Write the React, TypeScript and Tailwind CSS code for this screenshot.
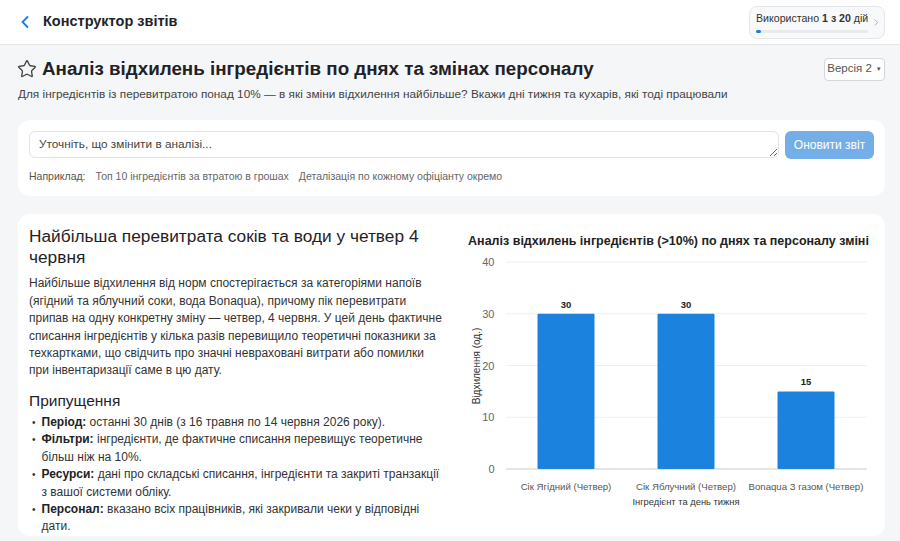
import { ChevronLeft, ChevronRight, Star } from "lucide-react";

const bars = [
  { label: "Сік Ягідний (Четвер)", value: 30 },
  { label: "Сік Яблучний (Четвер)", value: 30 },
  { label: "Bonaqua З газом (Четвер)", value: 15 },
];

const assumptions = [
  { title: "Період:", text: "останні 30 днів (з 16 травня по 14 червня 2026 року)." },
  { title: "Фільтри:", text: "інгредієнти, де фактичне списання перевищує теоретичне більш ніж на 10%." },
  { title: "Ресурси:", text: "дані про складські списання, інгредієнти та закриті транзакції з вашої системи обліку." },
  { title: "Персонал:", text: "вказано всіх працівників, які закривали чеки у відповідні дати." },
];

const font = "'Liberation Sans', Arial, sans-serif";

const Chart = () => {
  const top = 9;
  const step = 51.75;
  const zero = top + step * 4;
  const y = (v: number) => zero - (v / 10) * step;
  return (
    <svg width="411" height="262" className="block" style={{ fontFamily: font }}>
      {[40, 30, 20, 10, 0].map((v) => (
        <g key={v}>
          <line
            x1={43}
            x2={404}
            y1={y(v)}
            y2={y(v)}
            stroke={v === 0 ? "#dcdcdc" : "#efefef"}
            strokeWidth={v === 0 ? 1.5 : 1}
          />
          <text x={31.5} y={y(v) + 4} textAnchor="end" fontSize="11" fill="#666">
            {v}
          </text>
        </g>
      ))}
      <text
        x={0}
        y={0}
        transform="translate(16.5 113) rotate(-90)"
        textAnchor="middle"
        fontSize="10"
        fill="#333"
      >
        Відхилення (од.)
      </text>
      {bars.map((b, i) => {
        const cx = 103 + i * 120;
        return (
          <g key={b.label}>
            <rect x={cx - 28.5} y={y(b.value)} width={57} height={zero - y(b.value)} rx={1} fill="#1b82de" />
            <text x={cx} y={y(b.value) - 6} textAnchor="middle" fontSize="9.5" fontWeight="700" fill="#222">
              {b.value}
            </text>
            <text x={cx} y={237} textAnchor="middle" fontSize="9.6" fill="#555">
              {b.label}
            </text>
          </g>
        );
      })}
      <text x={223} y={252} textAnchor="middle" fontSize="9.4" fill="#333">
        Інгредієнт та день тижня
      </text>
    </svg>
  );
};

const App = () => {
  return (
    <div className="min-h-screen bg-[#f5f6f8] text-[#1f2328]" style={{ fontFamily: font }}>
      <header className="flex h-[45px] items-center justify-between border-b border-[#e3e5e8] bg-white pl-[15px] pr-[15px]">
        <div className="flex items-center gap-[8px]">
          <ChevronLeft className="text-[#1b7fe0]" size={20} strokeWidth={2.2} />
          <span className="text-[14.5px] font-semibold">Конструктор звітів</span>
        </div>
        <div className="flex h-[33px] w-[136px] items-center gap-[3px] rounded-lg border border-[#e4e6ea] bg-[#f8f9fa] pl-[6px] pr-[2px]">
          <div className="flex-1">
            <div className="whitespace-nowrap text-[10.6px] leading-[14px] text-[#333]">
              Використано <b>1 з 20</b> дій
            </div>
            <div className="mt-[5px] h-[3px] w-full rounded-full bg-[#e8eaee]">
              <div className="h-[3px] w-[5px] rounded-full bg-[#1b7fe0]" />
            </div>
          </div>
          <ChevronRight className="text-[#888]" size={15} strokeWidth={1.5} />
        </div>
      </header>

      <main className="pl-[18px] pr-[15px] pt-[11px]">
        <div className="flex items-center justify-between">
          <div className="flex items-center gap-[5px]">
            <Star className="-ml-[1px] text-[#444]" size={20} strokeWidth={1.6} />
            <h1 className="text-[18.8px] font-semibold leading-[26px]">
              Аналіз відхилень інгредієнтів по днях та змінах персоналу
            </h1>
          </div>
          <button className="flex h-[23px] w-[61px] items-center justify-center gap-[4px] rounded border border-[#d4d7dc] bg-white text-[11.5px] text-[#555]">
            Версія 2 <span className="text-[6px]">▼</span>
          </button>
        </div>
        <p className="mt-[4px] text-[11.8px] text-[#444]">
          Для інгредієнтів із перевитратою понад 10% — в які зміни відхилення найбільше? Вкажи дні тижня та кухарів, які тоді працювали
        </p>

        <section className="mt-[16px] rounded-xl bg-white px-[11px] pb-[12px] pt-[11px]">
          <div className="flex items-start gap-[6px]">
            <textarea
              rows={1}
              placeholder="Уточніть, що змінити в аналізі..."
              className="h-[27px] flex-1 rounded-md border border-[#e1e3e7] px-[9px] py-[4px] text-[11.8px] leading-[17px] placeholder:text-[#444]"
            />
            <button className="h-[28px] w-[89px] rounded-md bg-[#74aee9] text-[12px] font-medium text-white">
              Оновити звіт
            </button>
          </div>
          <div className="mt-[10px] flex gap-[10px] text-[10.5px] text-[#555]">
            <span>Наприклад:</span>
            <span className="text-[#666]">Топ 10 інгредієнтів за втратою в грошах</span>
            <span className="text-[#666]">Деталізація по кожному офіціанту окремо</span>
          </div>
        </section>

        <section className="mt-[18px] grid grid-cols-[417px_1fr] gap-[17px] rounded-xl bg-white px-[11px] pt-[12px]">
          <div>
            <h2 className="text-[17.3px] font-medium leading-[21px]">
              Найбільша перевитрата соків та води у четвер 4 червня
            </h2>
            <p className="mt-[7px] text-[12px] leading-[17.4px] text-[#333]">
              Найбільше відхилення від норм спостерігається за категоріями напоїв (ягідний та яблучний соки, вода Bonaqua), причому пік перевитрати припав на одну конкретну зміну — четвер, 4 червня. У цей день фактичне списання інгредієнтів у кілька разів перевищило теоретичні показники за техкартками, що свідчить про значні невраховані витрати або помилки при інвентаризації саме в цю дату.
            </p>
            <h3 className="mt-[11px] text-[15.5px] leading-[20px]">Припущення</h3>
            <ul className="mt-[3px] text-[12px] leading-[17.4px] text-[#333]">
              {assumptions.map((a) => (
                <li key={a.title} className="flex gap-[6px]">
                  <span className="pl-[3px] text-[10px]">•</span>
                  <p>
                    <b className="font-semibold text-[#222]">{a.title}</b> {a.text}
                  </p>
                </li>
              ))}
            </ul>
          </div>
          <div>
            <div className="mt-[7px] text-center text-[12.5px] font-bold leading-[16px] text-[#222]">
              Аналіз відхилень інгредієнтів (&gt;10%) по днях та персоналу зміні
            </div>
            <div className="mt-[4px]">
              <Chart />
            </div>
          </div>
        </section>
      </main>
    </div>
  );
};

export default App;
